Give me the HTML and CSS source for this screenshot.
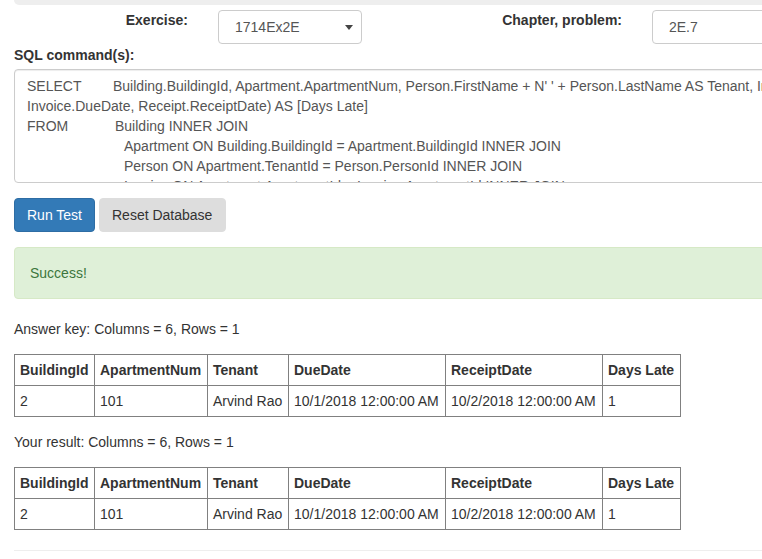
FILE: index.html
```html
<!DOCTYPE html>
<html>
<head>
<meta charset="utf-8">
<link rel="stylesheet" href="styles.css">
</head>
<body>
<div class="page">
  <div class="topbar"></div>
  <div class="selector-row">
    <label class="lbl lbl-ex">Exercise:</label>
    <div class="select">
      <span>1714Ex2E</span>
      <svg class="caret" width="8" height="5" viewBox="0 0 8 5"><path d="M0 0H8L4 5Z" fill="#444"/></svg>
    </div>
    <label class="lbl lbl-ch">Chapter, problem:</label>
    <div class="input">2E.7</div>
  </div>
  <label class="lbl sql-label">SQL command(s):</label>
  <div class="sql">
    <div class="line"><span class="kw kw-select">SELECT</span>Building.BuildingId, Apartment.ApartmentNum, Person.FirstName + N' ' + Person.LastName AS Tenant, Invoice.DueDate, Receipt.ReceiptDate, DATEDIFF(day,</div>
    <div class="line">Invoice.DueDate, Receipt.ReceiptDate) AS [Days Late]</div>
    <div class="line"><span class="kw kw-from">FROM</span>Building INNER JOIN</div>
    <div class="line indent">Apartment ON Building.BuildingId = Apartment.BuildingId INNER JOIN</div>
    <div class="line indent">Person ON Apartment.TenantId = Person.PersonId INNER JOIN</div>
    <div class="line indent">Invoice ON Apartment.ApartmentId = Invoice.ApartmentId INNER JOIN</div>
  </div>
  <div class="buttons">
    <button class="btn btn-primary">Run Test</button>
    <button class="btn btn-default">Reset Database</button>
  </div>
  <div class="alert">Success!</div>

  <p class="caption">Answer key: Columns = 6, Rows = 1</p>
  <table class="result">
    <tr><th class="c1">BuildingId</th><th class="c2">ApartmentNum</th><th class="c3">Tenant</th><th class="c4">DueDate</th><th class="c5">ReceiptDate</th><th class="c6">Days Late</th></tr>
    <tr><td>2</td><td>101</td><td>Arvind Rao</td><td>10/1/2018 12:00:00 AM</td><td>10/2/2018 12:00:00 AM</td><td>1</td></tr>
  </table>

  <p class="caption">Your result: Columns = 6, Rows = 1</p>
  <table class="result">
    <tr><th class="c1">BuildingId</th><th class="c2">ApartmentNum</th><th class="c3">Tenant</th><th class="c4">DueDate</th><th class="c5">ReceiptDate</th><th class="c6">Days Late</th></tr>
    <tr><td>2</td><td>101</td><td>Arvind Rao</td><td>10/1/2018 12:00:00 AM</td><td>10/2/2018 12:00:00 AM</td><td>1</td></tr>
  </table>
  <hr class="rule">
</div>
</body>
</html>
```
FILE: styles.css
```css
html, body {
  margin: 0;
  padding: 0;
  overflow: hidden;
  background: #fff;
}
body {
  font-family: "Liberation Sans", Arial, sans-serif;
  font-size: 14px;
  line-height: 20px;
  color: #333;
}
.page {
  width: 1000px;
  padding-left: 14px;
}
.topbar {
  height: 5px;
  background: #eee;
  border-bottom-left-radius: 6px;
}
.selector-row {
  display: flex;
  align-items: flex-start;
  margin-top: 5px;
  height: 34px;
}
.lbl {
  display: block;
  font-weight: 700;
}
.lbl-ex {
  width: 174px;
  text-align: right;
  margin-right: 30px;
}
.select {
  box-sizing: border-box;
  width: 144px;
  height: 34px;
  border: 1px solid #ccc;
  border-radius: 4px;
  padding: 6px 8px 6px 16px;
  color: #555;
  display: flex;
  align-items: center;
  justify-content: space-between;
}
.caret {
  display: block;
}
.lbl-ch {
  width: 260px;
  text-align: right;
  margin-right: 30px;
}
.input {
  box-sizing: border-box;
  width: 250px;
  height: 34px;
  border: 1px solid #ccc;
  border-radius: 4px;
  padding: 6px 16px;
  color: #555;
}
.sql-label {
  margin-top: 1px;
  margin-bottom: 4px;
}
.sql {
  box-sizing: border-box;
  height: 114px;
  border: 1px solid #ccc;
  border-radius: 4px;
  padding: 6px 12px;
  color: #555;
  overflow: hidden;
  box-shadow: inset 0 1px 1px rgba(0,0,0,.075);
}
.line {
  white-space: nowrap;
}
.kw {
  display: inline-block;
}
.kw-select { width: 86px; }
.kw-from { width: 88px; }
.indent { padding-left: 97px; }
.buttons {
  margin-top: 15px;
  display: flex;
  gap: 4px;
}
.btn {
  font-family: "Liberation Sans", Arial, sans-serif;
  font-size: 14px;
  line-height: 20px;
  padding: 6px 12px;
  border-radius: 4px;
  border: 1px solid transparent;
  margin: 0;
}
.btn-primary {
  background: #337ab7;
  border-color: #2e6da4;
  color: #fff;
}
.btn-default {
  background: #ddd;
  border-color: #ddd;
  color: #333;
  padding-right: 13px;
}
.alert {
  margin-top: 15px;
  margin-bottom: 20px;
  padding: 15px;
  background: #dff0d8;
  border: 1px solid #d6e9c6;
  border-radius: 4px;
  color: #3c763d;
}
.caption {
  margin: 0 0 15px 0;
}
.result {
  border-collapse: collapse;
  margin-bottom: 15px;
}
.result th, .result td {
  border: 1px solid #808080;
  padding: 5px;
  text-align: left;
  white-space: nowrap;
}
.result th {
  font-weight: 700;
}
.c1 { width: 69px; }
.c2 { width: 102px; }
.c3 { width: 70px; }
.c4 { width: 146px; }
.c5 { width: 146px; }
.c6 { width: 67px; }
.rule {
  border: 0;
  border-top: 1px solid #eee;
  margin: 20px 0 0 0;
}
```
